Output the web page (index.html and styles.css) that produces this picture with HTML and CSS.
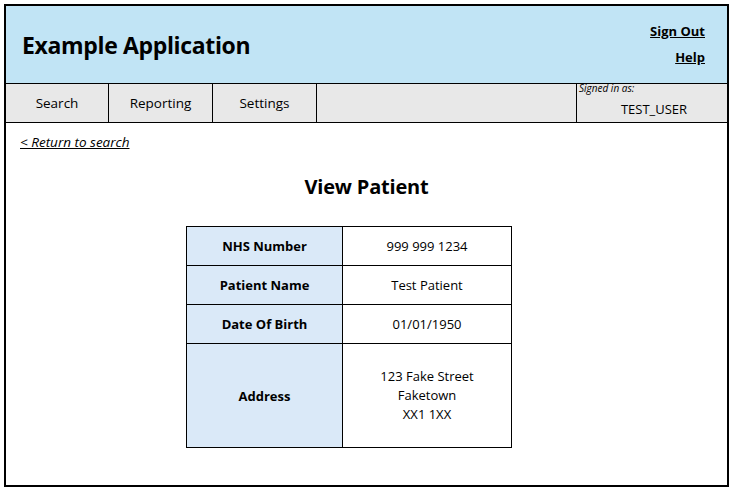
FILE: index.html
```html
<!DOCTYPE html>
<html lang="en">
<head>
<meta charset="utf-8">
<title>Example Application</title>
<link rel="stylesheet" href="styles.css">
</head>
<body>
<div class="frame">
  <header class="header">
    <h1 class="app-title">Example Application</h1>
    <div class="header-links">
      <a href="#" class="hlink">Sign Out</a>
      <a href="#" class="hlink">Help</a>
    </div>
  </header>
  <nav class="nav">
    <a href="#" class="nav-item first">Search</a>
    <a href="#" class="nav-item">Reporting</a>
    <a href="#" class="nav-item">Settings</a>
    <div class="nav-spacer"></div>
    <div class="signed">
      <span class="signed-label">Signed in as:</span>
      <span class="signed-user">TEST_USER</span>
    </div>
  </nav>
  <main class="main">
    <a href="#" class="back">&lt; Return to search</a>
    <h2 class="page-title">View Patient</h2>
    <table class="ptable">
      <tr><th>NHS Number</th><td>999 999 1234</td></tr>
      <tr><th>Patient Name</th><td>Test Patient</td></tr>
      <tr><th>Date Of Birth</th><td>01/01/1950</td></tr>
      <tr class="addr"><th>Address</th><td>123 Fake Street<br>Faketown<br>XX1 1XX</td></tr>
    </table>
  </main>
</div>
</body>
</html>
```
FILE: styles.css
```css
* { box-sizing: border-box; }
html, body { margin: 0; padding: 0; background: #fff; }
body {
  font-family: "Open Sans", "Noto Sans", sans-serif;
  color: #000;
}
.frame {
  margin: 4px;
  width: 725px;
  height: 483px;
  border: 2px solid #000;
  display: flex;
  flex-direction: column;
}
.header {
  height: 78px;
  background: #c1e4f5;
  border-bottom: 1px solid #000;
  display: flex;
  align-items: center;
  justify-content: space-between;
  padding: 0 22px 0 16px;
}
.app-title {
  margin: 0;
  font-size: 23px;
  font-weight: 700;
  letter-spacing: -0.35px;
  position: relative;
  top: 0;
}
.header-links {
  display: flex;
  flex-direction: column;
  align-items: flex-end;
  gap: 7px;
  margin-top: -1px;
}
.hlink {
  color: #000;
  font-weight: 700;
  font-size: 13px;
  line-height: 19px;
  text-decoration: underline;
}
.nav {
  height: 39px;
  background: #e8e8e8;
  border-bottom: 1px solid #000;
  display: flex;
}
.nav-item {
  width: 104px;
  border-right: 1px solid #000;
  display: flex;
  align-items: center;
  justify-content: center;
  color: #000;
  text-decoration: none;
  font-size: 13.5px;
  padding-bottom: 1px;
}
.nav-item.first { width: 103px; }
.nav-spacer {
  flex: 1;
  border-right: 1px solid #000;
}
.signed {
  width: 150px;
  display: flex;
  flex-direction: column;
}
.signed-label {
  font-style: italic;
  font-size: 10px;
  padding-left: 2px;
  line-height: 11px;
  margin-top: -1px;
}
.signed-user {
  text-align: center;
  font-size: 13px;
  margin-top: 6px;
  padding-left: 4px;
}
.main {
  flex: 1;
  padding: 7px 0 0 0;
}
.back {
  display: inline-block;
  margin-left: 14px;
  color: #000;
  font-style: italic;
  font-size: 13.5px;
  text-decoration: underline;
}
.page-title {
  margin: 21px 0 0 0;
  text-align: center;
  font-size: 20px;
  font-weight: 700;
  line-height: 28px;
  letter-spacing: -0.2px;
}
.ptable {
  margin: 25px 0 0 180px;
  border-collapse: collapse;
  font-size: 13px;
}
.ptable th, .ptable td {
  border: 1px solid #000;
  height: 39px;
  text-align: center;
  vertical-align: middle;
  padding: 0;
}
.ptable th {
  width: 156px;
  background: #dae9f8;
  font-weight: 700;
}
.ptable td {
  width: 169px;
  line-height: 19px;
}
.ptable tr.addr th, .ptable tr.addr td { height: 104px; }
```
